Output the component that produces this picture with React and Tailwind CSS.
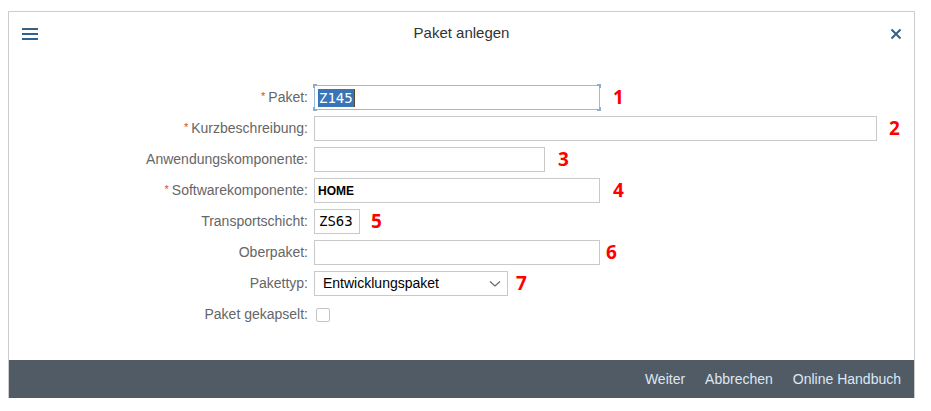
import React from "react";

const Label = ({ text, required }) => (
  <div className="flex items-center justify-end text-[14px] text-[#666666]">
    {required && <span className="mr-[3px] text-[11px] leading-none text-[#e0423a] self-start mt-[6px]">*</span>}
    <span>{text}:</span>
  </div>
);

const Num = ({ n, className }) => (
  <span className={"text-[19px] font-bold text-[#ff0000] leading-none " + (className || "")} style={{ fontFamily: "'Open Sans', 'Liberation Sans', sans-serif" }}>
    {n}
  </span>
);

const Field = ({ w, children, focus }) => (
  <div
    className={
      "relative flex h-[25px] items-center bg-white px-[3px] " +
      (focus ? "border border-[#9dbad6]" : "border border-[#c9c9c9]") +
      " " +
      w
    }
  >
    {focus && (
      <>
        <span className="absolute -left-[2px] -top-[2px] h-[4px] w-[4px] border-l-2 border-t-2 border-[#8eadc9]" />
        <span className="absolute -right-[2px] -top-[2px] h-[4px] w-[4px] border-r-2 border-t-2 border-[#8eadc9]" />
        <span className="absolute -left-[2px] -bottom-[2px] h-[4px] w-[4px] border-l-2 border-b-2 border-[#8eadc9]" />
        <span className="absolute -right-[2px] -bottom-[2px] h-[4px] w-[4px] border-r-2 border-b-2 border-[#8eadc9]" />
      </>
    )}
    {children}
  </div>
);

const mono = { fontFamily: "'DejaVu Sans Mono', 'Liberation Mono', monospace" };

export default function App() {
  return (
    <div className="h-[411px] w-[931px] bg-white pl-[8px] pt-[11px]" style={{ fontFamily: "'Liberation Sans', Arial, sans-serif" }}>
      <div className="flex h-[387px] w-[907px] flex-col border border-[#cccccc] border-b-0">
        <div className="grid h-[43px] grid-cols-[1fr_auto_1fr] items-center px-[13px]">
          <div className="flex w-[16px] flex-col gap-[3px]">
            <span className="h-[2px] w-[16px] bg-[#346187]" />
            <span className="h-[2px] w-[16px] bg-[#346187]" />
            <span className="h-[2px] w-[16px] bg-[#346187]" />
          </div>
          <span className="text-[15px] text-[#333333]">Paket anlegen</span>
          <svg width="12" height="12" viewBox="0 0 12 12" className="mr-[-1px] justify-self-end">
            <path d="M1.5 1.5 L10.5 10.5 M10.5 1.5 L1.5 10.5" stroke="#346187" strokeWidth="2" />
          </svg>
        </div>

        <div className="grid flex-1 grid-cols-[299px_1fr] content-start gap-x-[6px] gap-y-[6px] pt-[30px]">
          <Label text="Paket" required />
          <div className="flex items-center gap-[13px]">
            <Field w="w-[286px]" focus>
              <span className="bg-[#3875b8] px-[1px] text-[14px] leading-[18px] text-white" style={mono}>Z145</span>
              <span className="h-[18px] w-[1px] bg-[#5a4a2a]" />
            </Field>
            <Num n="1" />
          </div>

          <Label text="Kurzbeschreibung" required />
          <div className="flex items-center gap-[12px]">
            <Field w="w-[563px]" />
            <Num n="2" />
          </div>

          <Label text="Anwendungskomponente" />
          <div className="flex items-center gap-[13px]">
            <Field w="w-[231px]" />
            <Num n="3" />
          </div>

          <Label text="Softwarekomponente" required />
          <div className="flex items-center gap-[13px]">
            <Field w="w-[286px]">
              <span className="text-[12px] font-bold text-black">HOME</span>
            </Field>
            <Num n="4" />
          </div>

          <Label text="Transportschicht" />
          <div className="flex items-center gap-[11px]">
            <Field w="w-[46px]">
              <span className="pl-[1px] text-[14px] text-black" style={mono}>ZS63</span>
            </Field>
            <Num n="5" />
          </div>

          <Label text="Oberpaket" />
          <div className="flex items-center gap-[6px]">
            <Field w="w-[286px]" />
            <Num n="6" />
          </div>

          <Label text="Pakettyp" />
          <div className="flex items-center gap-[8px]">
            <Field w="w-[194px] justify-between pl-[8px] pr-[6px]">
              <span className="text-[14px] text-black">Entwicklungspaket</span>
              <svg width="12" height="8" viewBox="0 0 12 8">
                <path d="M1 1.5 L6 6 L11 1.5" fill="none" stroke="#666666" strokeWidth="1.2" />
              </svg>
            </Field>
            <Num n="7" />
          </div>

          <Label text="Paket gekapselt" />
          <div className="flex h-[25px] items-center pl-[2px]">
            <span className="h-[14px] w-[14px] rounded-[2px] border border-[#c4c4c4] bg-white" />
          </div>
        </div>

        <div className="flex h-[38px] items-center justify-end gap-[20px] bg-[#515b65] pr-[13px] text-[14px] text-[#dce8f4]">
          <span>Weiter</span>
          <span>Abbrechen</span>
          <span>Online Handbuch</span>
        </div>
      </div>
    </div>
  );
}
